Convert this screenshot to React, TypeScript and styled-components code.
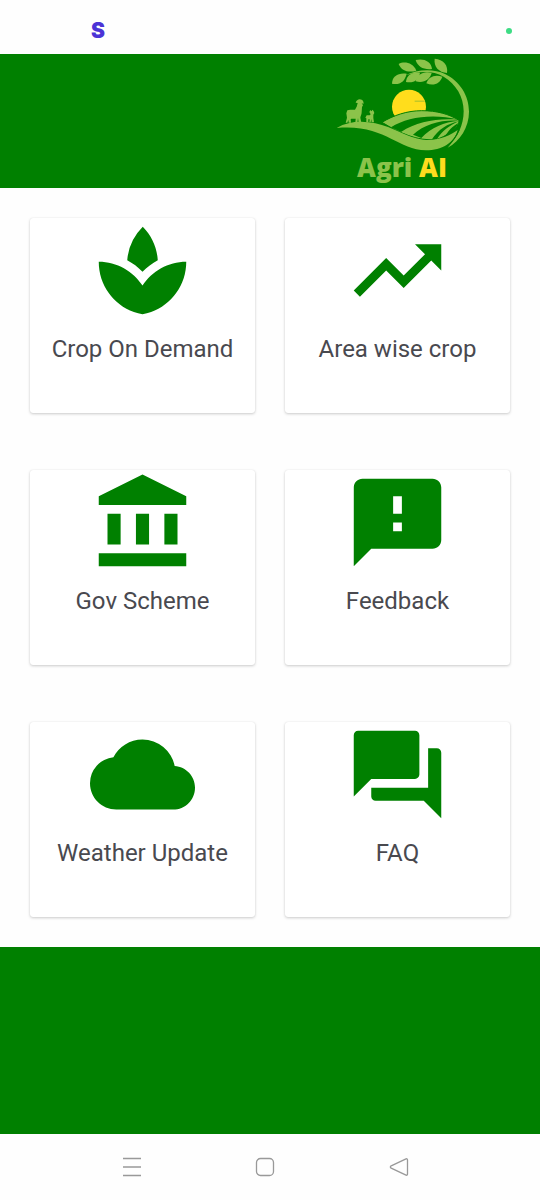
import React from "react";
import styled, { createGlobalStyle } from "styled-components";

const GlobalStyle = createGlobalStyle`
  *, *::before, *::after { box-sizing: border-box; }
  body {
    margin: 0;
    background: #fefefe;
    font-family: Roboto, "Liberation Sans", sans-serif;
  }
`;

const Screen = styled.div`
  display: flex;
  flex-direction: column;
  min-height: 100vh;
`;

const StatusBar = styled.div`
  display: flex;
  align-items: center;
  justify-content: space-between;
  height: 54px;
  padding: 8px 28px 0 91px;
`;

const AppBadge = styled.span`
  color: #4b33d6;
  font: 900 21px/24px Inter, sans-serif;
`;

const ActivityDot = styled.span`
  width: 6px;
  height: 6px;
  border-radius: 50%;
  background: #3ddc84;
`;

const Header = styled.header`
  display: flex;
  justify-content: flex-end;
  height: 134px;
  padding-right: 66px;
  background: #008000;
`;

const Brand = styled.a`
  display: flex;
  flex-direction: column;
  align-items: center;
  width: 144px;
  color: #8bc34a;
  text-decoration: none;
`;

const Emblem = styled.svg`
  display: block;
  width: 144px;
  height: 97px;
`;

const BrandName = styled.span`
  font: 800 26px/32px "Open Sans", sans-serif;
`;

const BrandAccent = styled.span`
  color: #fddc1f;
`;

const Menu = styled.main`
  display: grid;
  grid-template-columns: 1fr 1fr;
  gap: 57px 30px;
  padding: 30px;
`;

const Card = styled.button`
  display: flex;
  flex-direction: column;
  align-items: center;
  gap: 8px;
  min-height: 195px;
  padding: 0;
  border: 0;
  border-radius: 3px;
  background: #fff;
  box-shadow: 0 1px 3px rgba(0, 0, 0, 0.2), 0 0 1px rgba(0, 0, 0, 0.1);
  color: #49494f;
  font-family: inherit;
  cursor: pointer;
`;

const CardIcon = styled.svg`
  display: block;
  width: 105px;
  height: 105px;
  fill: #008000;
`;

const CardLabel = styled.span`
  font-size: 24px;
  line-height: 36px;
`;

const Footer = styled.footer`
  flex: 1;
  background: #008000;
`;

const SystemNav = styled.nav`
  display: grid;
  grid-template-columns: repeat(3, 1fr);
  align-items: center;
  justify-items: center;
  height: 66px;
  padding: 0 74px 0 65px;
`;

const NavButton = styled.button`
  display: flex;
  padding: 8px;
  border: 0;
  background: none;
  cursor: pointer;
`;

const NavIcon = styled.svg`
  width: 20px;
  height: 20px;
  fill: none;
  stroke: #999;
  stroke-width: 1.3;
  stroke-linejoin: round;
`;

const cards = [
  {
    label: "Crop On Demand",
    path: "M15.49 9.63c-.18-2.79-1.31-5.51-3.43-7.63a12.188 12.188 0 0 0-3.55 7.63c1.28.68 2.46 1.56 3.49 2.63 1.03-1.06 2.21-1.94 3.49-2.63zM12 15.45C9.85 12.17 6.18 10 2 10c0 5.32 3.36 9.82 8.03 11.49.63.23 1.29.4 1.97.51.68-.12 1.33-.29 1.97-.51C18.64 19.82 22 15.32 22 10c-4.18 0-7.85 2.17-10 5.45z",
  },
  {
    label: "Area wise crop",
    path: "m16 6 2.29 2.29-4.88 4.88-4-4L2 16.59 3.41 18l6-6 4 4 6.3-6.29L22 12V6z",
  },
  {
    label: "Gov Scheme",
    path: "M12 1 2 6v2h20V6zM4 10h3v7H4zM10.5 10h3v7h-3zM17 10h3v7h-3zM2 19h20v3H2z",
  },
  {
    label: "Feedback",
    path: "M20 2H4c-1.1 0-1.99.9-1.99 2L2 22l4-4h14c1.1 0 2-.9 2-2V4c0-1.1-.9-2-2-2zm-7 12h-2v-2h2v2zm0-4h-2V6h2v4z",
  },
  {
    label: "Weather Update",
    path: "M19.35 10.04A7.49 7.49 0 0 0 12 4C9.11 4 6.6 5.64 5.35 8.04A5.994 5.994 0 0 0 0 14c0 3.31 2.69 6 6 6h13c2.76 0 5-2.24 5-5 0-2.64-2.05-4.78-4.65-4.96z",
  },
  {
    label: "FAQ",
    path: "M21 6h-2v9H6v2c0 .55.45 1 1 1h11l4 4V7c0-.55-.45-1-1-1zm-4 6V3c0-.55-.45-1-1-1H3c-.55 0-1 .45-1 1v14l4-4h10c.55 0 1-.45 1-1z",
  },
];

function FarmEmblem() {
  return (
    <Emblem viewBox="30 12 432 291" fill="#8bc34a" aria-hidden="true">
      {/* sun */}
      <circle cx="267" cy="170" r="51" fill="#ffdd1c" />
      <path d="M284 152h30v3h-30z" fill="#a5bd2c" />
      {/* wreath stem */}
      <path d="M256 76C290 58 340 55 375 72C420 94 447 137 447 185C447 232 420 273 383 293C413 262 431 225 431 184C431 139 408 103 371 80C338 61 296 63 256 76Z" />
      {/* leaves above and below the stem */}
      <path d="M236 42C253 33 279 38 289 62C266 69 244 63 236 42Z" />
      <path d="M287 30C311 24 334 34 336 57C312 60 293 51 287 30Z" />
      <path d="M344 26C370 28 385 46 381 69C356 67 341 50 344 26Z" />
      <path d="M216 101C216 78 236 67 260 71C255 94 239 106 216 101Z" />
      <path d="M258 96C259 75 277 64 300 68C297 89 282 100 258 96Z" />
      <path d="M287 94C291 73 311 62 335 69C329 90 311 100 287 94Z" />
      <path d="M319 100C325 80 345 72 367 80C360 100 342 109 319 100Z" />
      {/* field, cut by furrows that meet on the right */}
      <path
        d="M186 217C220 196 262 182 305 182C350 182 387 192 417 211L416 222C404 240 379 259 347 269C293 273 242 251 186 217Z"
        stroke="#008000"
        strokeWidth="3"
      />
      <g fill="#008000">
        <path d="M213 232C262 201 338 190 416 209C352 204 292 214 243 246Z" />
        <path d="M279 254C315 222 362 209 416 212C372 216 334 232 304 264Z" />
        <path d="M335 269C356 238 382 221 417 214C389 226 367 243 351 267Z" />
        <path d="M373 262C384 243 398 227 417 218C406 233 397 246 386 257Z" />
      </g>
      {/* foreground hill */}
      <path d="M50 234C85 214 125 212 166 220C220 231 259 263 310 269C354 274 391 256 413 240C404 278 365 301 318 301C230 299 193 221 50 234Z" />
      <path d="M383 287C400 272 410 257 417 240" fill="none" stroke="#008000" strokeWidth="3" />
      {/* goat and kid */}
      <path d="M107 158C109 149 118 145 125 149C130 151 132 158 130 162L125 159L129 166L126 171L125 187C125 193 122 197 121 203L124 218H116L114 204L112 218H106L107 206H94L92 208L93 218H86L85 210L82 218H77L81 203L79 190L82 181L91 179H105L110 170L113 159Z" />
      <path d="M148 186L151 180L154 184L158 179L161 184L163 189L160 194L160 204L162 217H155L154 207L152 217H148L149 208H145V217H139L139 205L136 203L140 196H149L152 193Z" />
    </Emblem>
  );
}

export default function App() {
  return (
    <Screen>
      <GlobalStyle />
      <StatusBar>
        <AppBadge>S</AppBadge>
        <ActivityDot />
      </StatusBar>
      <Header>
        <Brand href="#">
          <FarmEmblem />
          <BrandName>
            Agri <BrandAccent>AI</BrandAccent>
          </BrandName>
        </Brand>
      </Header>
      <Menu>
        {cards.map((card) => (
          <Card key={card.label} type="button">
            <CardIcon viewBox="0 0 24 24" aria-hidden="true">
              <path d={card.path} />
            </CardIcon>
            <CardLabel>{card.label}</CardLabel>
          </Card>
        ))}
      </Menu>
      <Footer />
      <SystemNav aria-label="System">
        <NavButton type="button" aria-label="Recent apps">
          <NavIcon viewBox="0 0 20 20">
            <path d="M1 1.5h18M1 10h18M1 18.5h18" />
          </NavIcon>
        </NavButton>
        <NavButton type="button" aria-label="Home">
          <NavIcon viewBox="0 0 20 20">
            <rect x="1.5" y="1.5" width="17" height="17" rx="4" />
          </NavIcon>
        </NavButton>
        <NavButton type="button" aria-label="Back">
          <NavIcon viewBox="0 0 20 20">
            <path d="M17 1.8 2.2 8.8Q.5 10 2.2 11.2L17 18.2Q18.5 18.5 18.5 17V3Q18.5 1.5 17 1.8Z" />
          </NavIcon>
        </NavButton>
      </SystemNav>
    </Screen>
  );
}
